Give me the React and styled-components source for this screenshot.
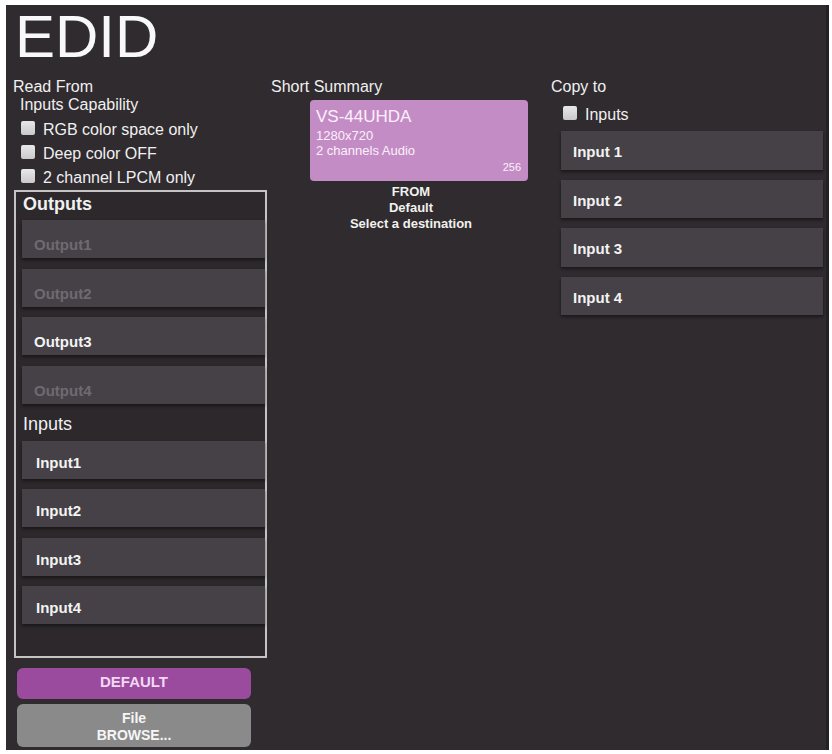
import React from "react";
import styled, { createGlobalStyle } from "styled-components";

const GlobalStyle = createGlobalStyle`
  html, body {
    margin: 0;
    padding: 0;
    background: #ffffff;
  }
  body {
    font-family: "Liberation Sans", Arial, sans-serif;
  }
`;

const Panel = styled.div`
  display: flow-root;
  margin: 5px 0 0 6px;
  width: 823px;
  height: 745px;
  box-sizing: border-box;
  padding: 0 0 0 7px;
  background: #2f2b2f;
  border-right: 3px solid #242024;
  color: #f0f0f0;
`;

const Title = styled.h1`
  margin: 0;
  padding-left: 2px;
  font-size: 60px;
  line-height: 64px;
  font-weight: 400;
  color: #f8f8f8;
`;

const Columns = styled.div`
  display: grid;
  grid-template-columns: 258px 280px 1fr;
  margin-top: 8.5px;
`;

const Column = styled.div`
  display: flex;
  flex-direction: column;
  min-width: 0;
`;

const Label = styled.div`
  font-size: 16px;
  line-height: 18px;
  padding-left: ${(p) => p.$indent || 0}px;
`;

const CheckList = styled.div`
  display: flex;
  flex-direction: column;
  margin-top: 4px;
`;

const CheckRow = styled.label`
  display: flex;
  align-items: flex-start;
  gap: 8px;
  height: 24px;
  line-height: 24px;
  font-size: 16px;
  padding-left: ${(p) => p.$indent}px;
  margin-top: ${(p) => p.$top || 0}px;
`;

const Check = styled.span`
  width: 14px;
  height: 14px;
  margin-top: 3px;
  flex: none;
  border-radius: 2px;
  background: linear-gradient(#e8e8e8, #c9c9c9);
`;

const SourceBox = styled.div`
  margin: 0.5px 0 0 1px;
  width: 253px;
  box-sizing: border-box;
  border: 2px solid #c4c4c4;
  padding: 1px 0 31.5px 6px;
  background: #2c282c;
`;

const SectionHeading = styled.div`
  font-size: 18px;
  line-height: 22px;
  font-weight: ${(p) => (p.$bold ? 700 : 400)};
  padding-left: 1px;
  margin: ${(p) => p.$top || 0}px 0 ${(p) => p.$bottom}px;
`;

const RowList = styled.div`
  display: flex;
  flex-direction: column;
  gap: ${(p) => p.$gap}px;
  margin: ${(p) => p.$margin || 0};
`;

const PortRow = styled.div`
  height: ${(p) => p.$height || 38}px;
  box-sizing: border-box;
  padding: ${(p) => p.$padTop}px 0 0 ${(p) => p.$padLeft}px;
  background: #454147;
  box-shadow: 0 2px 3px rgba(0, 0, 0, 0.45);
  font-size: 15px;
  line-height: 18px;
  font-weight: 700;
  color: ${(p) => (p.$dim ? "#6e6a70" : "#f3f3f3")};
`;

const ActionButton = styled.div`
  width: 234px;
  margin: ${(p) => p.$top}px 0 0 4px;
  box-sizing: border-box;
  border-radius: 6px;
  text-align: center;
  font-weight: 700;
  background: ${(p) => p.$bg};
  color: ${(p) => p.$fg};
`;

const DefaultButton = styled(ActionButton)`
  height: 31px;
  padding-bottom: 4px;
  font-size: 15px;
  line-height: 27px;
`;

const BrowseButton = styled(ActionButton)`
  height: 43px;
  padding-top: 6px;
  font-size: 14px;
  line-height: 17px;
`;

const SummaryCard = styled.div`
  margin: 4.5px 0 0 39px;
  width: 218px;
  height: 81px;
  box-sizing: border-box;
  padding: 7.4px 7px 0 6px;
  border-radius: 4px;
  background: #c48cc5;
  color: #fbf0fb;
`;

const CardTitle = styled.div`
  font-size: 17px;
  line-height: 20px;
`;

const CardLine = styled.div`
  font-size: 13px;
  line-height: 15px;
  margin-top: ${(p) => p.$top || 0}px;
`;

const CardCount = styled.div`
  font-size: 11px;
  line-height: 13px;
  margin-top: 3.4px;
  text-align: right;
`;

const Caption = styled.div`
  margin-top: 3.3px;
  text-align: center;
  font-size: 13px;
  line-height: 15.7px;
  font-weight: 700;
  color: #f1f1ee;
`;

const outputs = [
  { name: "Output1", dim: true },
  { name: "Output2", dim: true },
  { name: "Output3", dim: false },
  { name: "Output4", dim: true },
];

const inputs = ["Input1", "Input2", "Input3", "Input4"];
const targets = ["Input 1", "Input 2", "Input 3", "Input 4"];
const options = ["RGB color space only", "Deep color OFF", "2 channel LPCM only"];

export default function App() {
  return (
    <>
      <GlobalStyle />
      <Panel>
        <Title>EDID</Title>
        <Columns>
          <Column>
            <Label>Read From</Label>
            <Label $indent={7}>Inputs Capability</Label>
            <CheckList>
              {options.map((o) => (
                <CheckRow key={o} $indent={8}>
                  <Check />
                  {o}
                </CheckRow>
              ))}
            </CheckList>
            <SourceBox>
              <SectionHeading $bold $bottom={5}>
                Outputs
              </SectionHeading>
              <RowList $gap={10.5}>
                {outputs.map((o) => (
                  <PortRow key={o.name} $dim={o.dim} $padTop={16} $padLeft={12}>
                    {o.name}
                  </PortRow>
                ))}
              </RowList>
              <SectionHeading $top={9.3} $bottom={6.2}>
                Inputs
              </SectionHeading>
              <RowList $gap={10.5}>
                {inputs.map((i) => (
                  <PortRow key={i} $padTop={13} $padLeft={14}>
                    {i}
                  </PortRow>
                ))}
              </RowList>
            </SourceBox>
            <DefaultButton $top={10} $bg="#9b4b9e" $fg="#f2d8f2">
              DEFAULT
            </DefaultButton>
            <BrowseButton $top={5} $bg="#8a8a8a" $fg="#f6f6f6">
              File
              <br />
              BROWSE...
            </BrowseButton>
          </Column>

          <Column>
            <Label>Short Summary</Label>
            <SummaryCard>
              <CardTitle>VS-44UHDA</CardTitle>
              <CardLine $top={0.6}>1280x720</CardLine>
              <CardLine>2 channels Audio</CardLine>
              <CardCount>256</CardCount>
            </SummaryCard>
            <Caption>
              FROM
              <br />
              Default
              <br />
              Select a destination
            </Caption>
          </Column>

          <Column>
            <Label>Copy to</Label>
            <CheckRow $indent={12} $top={7}>
              <Check />
              Inputs
            </CheckRow>
            <RowList $gap={10} $margin="4.5px 3px 0 10px">
              {targets.map((t) => (
                <PortRow key={t} $height={38.5} $padTop={12} $padLeft={12}>
                  {t}
                </PortRow>
              ))}
            </RowList>
          </Column>
        </Columns>
      </Panel>
    </>
  );
}
